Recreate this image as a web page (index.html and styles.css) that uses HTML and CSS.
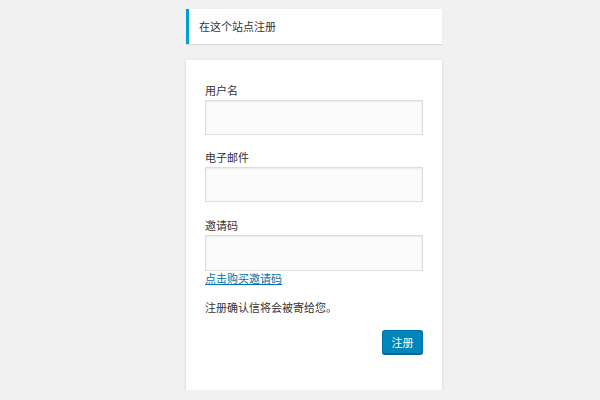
FILE: index.html
```html
<!DOCTYPE html>
<html lang="zh-CN">
<head>
    <meta charset="UTF-8">
    <meta name="viewport" content="width=device-width, initial-scale=1.0">
    <title>注册</title>
    <link rel="stylesheet" href="styles.css">
</head>
<body>
    <div class="login">
        <p class="message">在这个站点注册</p>

        <form class="register-form">
            <div class="field">
                <label for="user_login">用户名</label>
                <input type="text" id="user_login" class="input">
            </div>
            <div class="field">
                <label for="user_email">电子邮件</label>
                <input type="email" id="user_email" class="input">
            </div>
            <div class="field invite">
                <label for="invite_code">邀请码</label>
                <input type="text" id="invite_code" class="input">
                <a href="#" class="buy-link">点击购买邀请码</a>
            </div>
            <p class="reg-note">注册确认信将会被寄给您。</p>
            <div class="submit">
                <button type="button" class="button-primary">注册</button>
            </div>
        </form>
    </div>
</body>
</html>
```

FILE: styles.css
```css
* {
    margin: 0;
    padding: 0;
    box-sizing: border-box;
}

body {
    background: #f1f1f1;
    color: #333;
    font-family: "Liberation Sans", "Noto Sans CJK SC", sans-serif;
    font-size: 11px;
    line-height: 14px;
}

.login {
    width: 256px;
    margin-left: 186px;
    padding-top: 9px;
}

.message {
    background: #fff;
    border-left: 3px solid #00a0d2;
    box-shadow: 0 1px 1px rgba(0,0,0,0.1);
    height: 35px;
    padding-left: 10px;
    display: flex;
    align-items: center;
}

.register-form {
    margin-top: 16px;
    background: #fff;
    box-shadow: 0 1px 3px rgba(0,0,0,0.13);
    padding: 24px 19px 36px;
    display: flex;
    flex-direction: column;
}

.field {
    display: flex;
    flex-direction: column;
    margin-bottom: 16px;
}

.field label {
    margin-bottom: 2px;
}

.input {
    height: 35px;
    width: 100%;
    border: 1px solid #ddd;
    background: #fbfbfb;
    box-shadow: inset 0 1px 2px rgba(0,0,0,0.07);
    outline: none;
}

.invite {
    margin-top: 1px;
    margin-bottom: 15px;
}

.invite .input {
    height: 36px;
}

.buy-link {
    color: #0073aa;
    text-decoration: underline;
    align-self: flex-start;
    margin-top: 1px;
}

.reg-note {
    margin-bottom: 15px;
}

.submit {
    display: flex;
    justify-content: flex-end;
}

.button-primary {
    height: 24px;
    width: 41px;
    background: #0085ba;
    border: 1px solid #0073aa;
    border-bottom-color: #006799;
    border-radius: 3px;
    box-shadow: 0 1px 0 #006799;
    color: #fff;
    font-family: inherit;
    font-size: 11px;
    cursor: pointer;
}
```
